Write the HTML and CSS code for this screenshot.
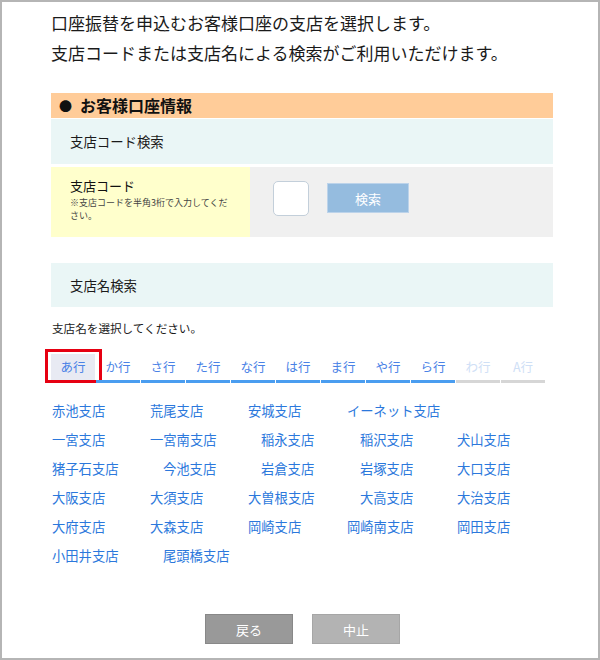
FILE: index.html
```html
<!DOCTYPE html>
<html lang="ja">
<head>
<meta charset="utf-8">
<title>支店選択</title>
<link rel="stylesheet" href="styles.css">
</head>
<body>
<div class="frame">
  <div class="content">
    <p class="intro">口座振替を申込むお客様口座の支店を選択します。<br>支店コードまたは支店名による検索がご利用いただけます。</p>

    <h2 class="section-head"><span class="dot">●</span>お客様口座情報</h2>

    <div class="sub-head">支店コード検索</div>

    <div class="code-row">
      <div class="code-label">
        <div class="label">支店コード</div>
        <div class="note">※支店コードを半角3桁で入力してください。</div>
      </div>
      <div class="code-field">
        <input class="code-input" type="text" aria-label="支店コード">
        <button class="search-btn" type="button">検索</button>
      </div>
    </div>

    <div class="sub-head sub-head-2">支店名検索</div>

    <p class="prompt">支店名を選択してください。</p>

    <ul class="tabs">
      <li class="tab active">あ行</li>
      <li class="tab">か行</li>
      <li class="tab">さ行</li>
      <li class="tab">た行</li>
      <li class="tab">な行</li>
      <li class="tab">は行</li>
      <li class="tab">ま行</li>
      <li class="tab">や行</li>
      <li class="tab">ら行</li>
      <li class="tab disabled">わ行</li>
      <li class="tab disabled">A行</li>
    </ul>

    <div class="branches">
      <a class="branch" href="#">赤池支店</a>
      <a class="branch" href="#">荒尾支店</a>
      <a class="branch" href="#">安城支店</a>
      <a class="branch" href="#">イーネット支店</a>
      <span class="branch empty"></span>

      <a class="branch" href="#">一宮支店</a>
      <a class="branch" href="#">一宮南支店</a>
      <a class="branch indent" href="#">稲永支店</a>
      <a class="branch indent" href="#">稲沢支店</a>
      <a class="branch" href="#">犬山支店</a>

      <a class="branch" href="#">猪子石支店</a>
      <a class="branch indent" href="#">今池支店</a>
      <a class="branch indent" href="#">岩倉支店</a>
      <a class="branch indent" href="#">岩塚支店</a>
      <a class="branch" href="#">大口支店</a>

      <a class="branch" href="#">大阪支店</a>
      <a class="branch" href="#">大須支店</a>
      <a class="branch" href="#">大曽根支店</a>
      <a class="branch indent" href="#">大高支店</a>
      <a class="branch" href="#">大治支店</a>

      <a class="branch" href="#">大府支店</a>
      <a class="branch" href="#">大森支店</a>
      <a class="branch" href="#">岡崎支店</a>
      <a class="branch" href="#">岡崎南支店</a>
      <a class="branch" href="#">岡田支店</a>

      <a class="branch" href="#">小田井支店</a>
      <a class="branch indent" href="#">尾頭橋支店</a>
    </div>

    <div class="actions">
      <button class="btn btn-back" type="button">戻る</button>
      <button class="btn btn-cancel" type="button">中止</button>
    </div>
  </div>
</div>
</body>
</html>
```

FILE: styles.css
```css
* {
  box-sizing: border-box;
}

html, body {
  margin: 0;
  padding: 0;
  background: #ffffff;
}

body {
  font-family: "Noto Sans CJK JP", "Noto Sans", sans-serif;
  color: #1a1a1a;
}

.frame {
  width: 600px;
  height: 660px;
  border: 2px solid #b5b5b5;
  overflow: hidden;
}

.content {
  width: 502px;
  margin-left: 49px;
}

.intro {
  margin: 6px 0 0;
  font-size: 17px;
  line-height: 30px;
  color: #1a1a1a;
}

.section-head {
  margin: 25px 0 0;
  height: 25px;
  line-height: 25px;
  background: #ffcc99;
  font-size: 16px;
  font-weight: bold;
  color: #111;
  padding-left: 8px;
}

.dot {
  display: inline-block;
  width: 21px;
  font-size: 13px;
  vertical-align: top;
}

.sub-head {
  margin-top: 1px;
  height: 45px;
  line-height: 45px;
  background: #eaf6f6;
  font-size: 13.4px;
  padding-left: 19px;
  color: #1a1a1a;
}

.sub-head-2 {
  margin-top: 26px;
  height: 44px;
  line-height: 44px;
}

.code-row {
  margin-top: 3px;
  height: 70px;
  display: flex;
}

.code-label {
  width: 199px;
  background: #ffffcc;
  padding: 10px 0 0 19px;
}

.label {
  font-size: 13px;
  line-height: 18px;
  color: #111;
}

.note {
  margin-top: 1px;
  width: 162px;
  font-size: 9px;
  line-height: 13px;
  color: #444;
}

.code-field {
  flex: 1;
  background: #f0f0f0;
  display: flex;
  align-items: flex-start;
  padding: 14px 0 0 23px;
  gap: 18px;
}

.code-input {
  width: 36px;
  height: 35px;
  margin: 0;
  border: 1px solid #c3cfda;
  border-radius: 5px;
  background: #fff;
}

.search-btn {
  margin: 2px 0 0;
  width: 82px;
  height: 30px;
  background: #95bcdf;
  border: 1px solid #bcd3ea;
  color: #fff;
  font-family: inherit;
  font-size: 13px;
  padding: 0;
}

.prompt {
  margin: 11px 0 0 1px;
  font-size: 11.6px;
  line-height: 20px;
  color: #1a1a1a;
}

.tabs {
  list-style: none;
  margin: 16px 0 0;
  padding: 0;
  display: flex;
  gap: 1px;
}

.tab {
  position: relative;
  width: 44px;
  height: 29px;
  line-height: 26px;
  text-align: center;
  font-size: 12.5px;
  color: #4a82e6;
  border-bottom: 3px solid #4a9df0;
}

.tab.active {
  background: #e8eaf3;
}

.tab.active::after {
  content: "";
  position: absolute;
  left: -6px;
  right: -7px;
  top: -5px;
  bottom: -3px;
  border: 3px solid #e60012;
}

.tab.disabled {
  color: #cfe0f6;
  border-bottom-color: #d6d6d6;
}

.branches {
  margin-top: 13px;
  padding-left: 1px;
  display: grid;
  grid-template-columns: 98px 98px 99px 110px auto;
  grid-auto-rows: 29px;
}

.branch {
  font-size: 13.3px;
  line-height: 29px;
  color: #2b78dc;
  text-decoration: none;
  white-space: nowrap;
}

.branch.indent {
  padding-left: 13px;
}

.actions {
  margin-top: 44px;
  display: flex;
  justify-content: center;
  gap: 19px;
  padding-left: 1px;
}

.btn {
  width: 88px;
  height: 30px;
  margin: 0;
  padding: 0;
  font-family: inherit;
  font-size: 13px;
  color: #fff;
}

.btn-back {
  background: #999999;
  border: 1px solid #888888;
}

.btn-cancel {
  background: #b3b3b3;
  border: 1px solid #a6a6a6;
}
```
